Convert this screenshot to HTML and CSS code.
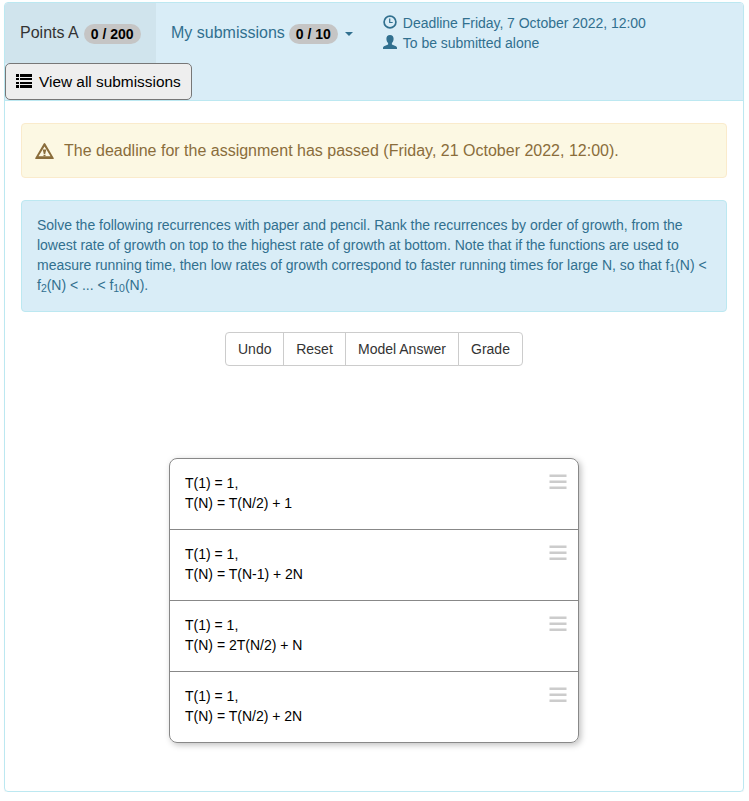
FILE: index.html
```html
<!DOCTYPE html>
<html lang="en">
<head>
<meta charset="utf-8">
<title>Recurrences</title>
<link rel="stylesheet" href="styles.css">
</head>
<body>
<main class="panel">
  <header class="header">
    <nav class="nav">
      <div class="tab active"><span>Points A</span><span class="badge">0 / 200</span></div>
      <a class="tab"><span>My submissions</span><span class="badge count">0 / 10</span><span class="caret"></span></a>
      <div class="meta">
        <div class="meta-row"><svg width="14" height="14" viewBox="0 0 14 14"><circle cx="7" cy="7" r="5.9" fill="none" stroke="currentColor" stroke-width="1.7"/><path d="M6.700 3.500v4h3" fill="none" stroke="currentColor" stroke-width="1.200"/></svg><span>Deadline Friday, 7 October 2022, 12:00</span></div>
        <div class="meta-row"><svg class="person" width="14" height="14" viewBox="0 0 14 14"><path d="M7 0C9.400 0 10.600 1.500 10.600 3.700C10.600 5.500 9.900 7 8.900 8V9.500L13 11.300Q14 11.800 14 12.800V14H0V12.800Q0 11.800 1 11.300L5.100 9.500V8C4.100 7 3.400 5.500 3.400 3.700C3.400 1.500 4.600 0 7 0Z" fill="currentColor"/></svg><span>To be submitted alone</span></div>
      </div>
    </nav>
    <button class="view-all"><svg width="16" height="14" viewBox="0 0 16 14" fill="currentColor"><path d="M0 0h3v3H0zM4 0h12v3H4zM0 4h3v2H0zM4 4h12v2H4zM0 8h3v2H0zM4 8h12v2H4zM0 11h3v3H0zM4 11h12v3H4z"/></svg><span>View all submissions</span></button>
  </header>
  <section class="content">
    <div class="alert warning"><svg width="19" height="16" viewBox="0 0 19 16"><path fill="currentColor" fill-rule="evenodd" d="M8.600 .7Q9.500-.5 10.400 .7L18.700 15Q19 16 18 16H1Q0 16 .3 15ZM9.500 3.500L3.500 13.300H15.500Z"/><path fill="currentColor" d="M7.700 6.500H11.300L10.200 11H8.800ZM8.500 11.700H10.500V13.300H8.500Z"/></svg><span>The deadline for the assignment has passed (Friday, 21 October 2022, 12:00).</span></div>
    <div class="alert info">Solve the following recurrences with paper and pencil. Rank the recurrences by order of growth, from the<br>lowest rate of growth on top to the highest rate of growth at bottom. Note that if the functions are used to<br>measure running time, then low rates of growth correspond to faster running times for large N, so that f<sub>1</sub>(N) &lt;<br>f<sub>2</sub>(N) &lt; ... &lt; f<sub>10</sub>(N).</div>
    <div class="buttons"><button>Undo</button><button>Reset</button><button>Model Answer</button><button>Grade</button></div>
    <ul class="list">
      <li><div>T(1) = 1,<br>T(N) = T(N/2) + 1</div><svg class="handle" width="18" height="16" viewBox="0 0 18 16"><path d="M.5 1.700h17M.5 7.700h17M.5 13.700h17"/></svg></li>
      <li><div>T(1) = 1,<br>T(N) = T(N-1) + 2N</div><svg class="handle" width="18" height="16" viewBox="0 0 18 16"><path d="M.5 1.700h17M.5 7.700h17M.5 13.700h17"/></svg></li>
      <li><div>T(1) = 1,<br>T(N) = 2T(N/2) + N</div><svg class="handle" width="18" height="16" viewBox="0 0 18 16"><path d="M.5 1.700h17M.5 7.700h17M.5 13.700h17"/></svg></li>
      <li><div>T(1) = 1,<br>T(N) = T(N/2) + 2N</div><svg class="handle" width="18" height="16" viewBox="0 0 18 16"><path d="M.5 1.700h17M.5 7.700h17M.5 13.700h17"/></svg></li>
    </ul>
  </section>
</main>
</body>
</html>
```
FILE: styles.css
```css
* { box-sizing: border-box; }
body {
  margin: 0;
  padding: 2px 5px 0 4px;
  background: #fff;
  font: 14px/20px "Liberation Sans", Arial, sans-serif;
  color: #333;
}
button { font-family: inherit; margin: 0; }
svg { display: block; flex: none; }
.panel {
  height: 790px;
  border: 1px solid #bce8f1;
  border-radius: 4px;
  box-shadow: 0 1px 1px rgba(0, 0, 0, .05);
}
.header {
  height: 98px;
  background: #d9edf7;
  border-bottom: 1px solid #bce8f1;
  border-radius: 3px 3px 0 0;
}
.nav { display: flex; height: 60px; color: #31708f; }
.tab {
  display: flex;
  align-items: center;
  padding: 0 15px;
  font-size: 16px;
  white-space: nowrap;
}
.tab.active { width: 151px; background: #d0e4ed; color: #333; border-radius: 3px 0 0 0; }
.badge {
  margin: 2px 0 0 5px;
  padding: 0 7px;
  height: 20px;
  border-radius: 10px;
  background: #c5c5c5;
  color: #000;
  font-size: 14px;
  font-weight: bold;
  line-height: 20px;
}
.badge.count { margin-left: 4px; }
.caret {
  margin: 2px 0 0 7px;
  border: 4px solid transparent;
  border-top-color: currentColor;
  border-bottom: 0;
}
.meta { padding: 10px 0 0 15px; letter-spacing: -.03px; }
.meta-row { display: flex; align-items: center; gap: 6px; height: 20px; white-space: nowrap; }
.meta-row svg { margin-top: -2px; }
.view-all {
  display: flex;
  align-items: center;
  gap: 7px;
  width: 187px;
  height: 37px;
  padding: 0 10px;
  border: 1px solid #777;
  border-radius: 5px;
  background: #eee;
  color: #000;
  font-size: 15.4px;
  white-space: nowrap;
}
.view-all svg { margin-top: -1px; }
.content { padding: 22px 16px 0; }
.alert { border: 1px solid; border-radius: 4px; }
.warning {
  display: flex;
  align-items: center;
  gap: 9px;
  height: 55px;
  padding: 0 14px;
  background: #fcf8e3;
  border-color: #faebcc;
  color: #8a6d3b;
  font-size: 16px;
}
.warning svg { margin: 0 1px 0 -1px; }
.info {
  height: 112px;
  margin-top: 22px;
  padding: 14px 15px;
  background: #d9edf7;
  border-color: #bce8f1;
  color: #31708f;
  letter-spacing: -.025px;
  white-space: nowrap;
}
sub { position: relative; bottom: -2px; font-size: 10.5px; line-height: 0; vertical-align: baseline; }
.buttons { display: flex; justify-content: center; margin-top: 20px; }
.buttons button {
  height: 34px;
  padding: 0 12px;
  border: 1px solid #ccc;
  background: #fff;
  color: #333;
  font-size: 14px;
}
.buttons button + button { margin-left: -1px; }
.buttons button:first-child { width: 59px; border-radius: 4px 0 0 4px; }
.buttons button:last-child { width: 65px; border-radius: 0 4px 4px 0; }
.buttons button:nth-child(2) { width: 63px; }
.buttons button:nth-child(3) { width: 114px; }
.list {
  width: 410px;
  margin: 92px auto 0;
  padding: 0;
  list-style: none;
  border: 1px solid #888;
  border-radius: 8px;
  box-shadow: 2px 2px 6px rgba(0, 0, 0, .25);
  color: #000;
}
.list li {
  display: flex;
  justify-content: space-between;
  height: 71px;
  padding: 14px 11px 0 15px;
}
.list li:first-child { height: 70px; }
.list li + li { border-top: 1px solid #888; }
.handle { margin-top: 1px; fill: none; stroke: #ccc; stroke-width: 2.5; }
```
